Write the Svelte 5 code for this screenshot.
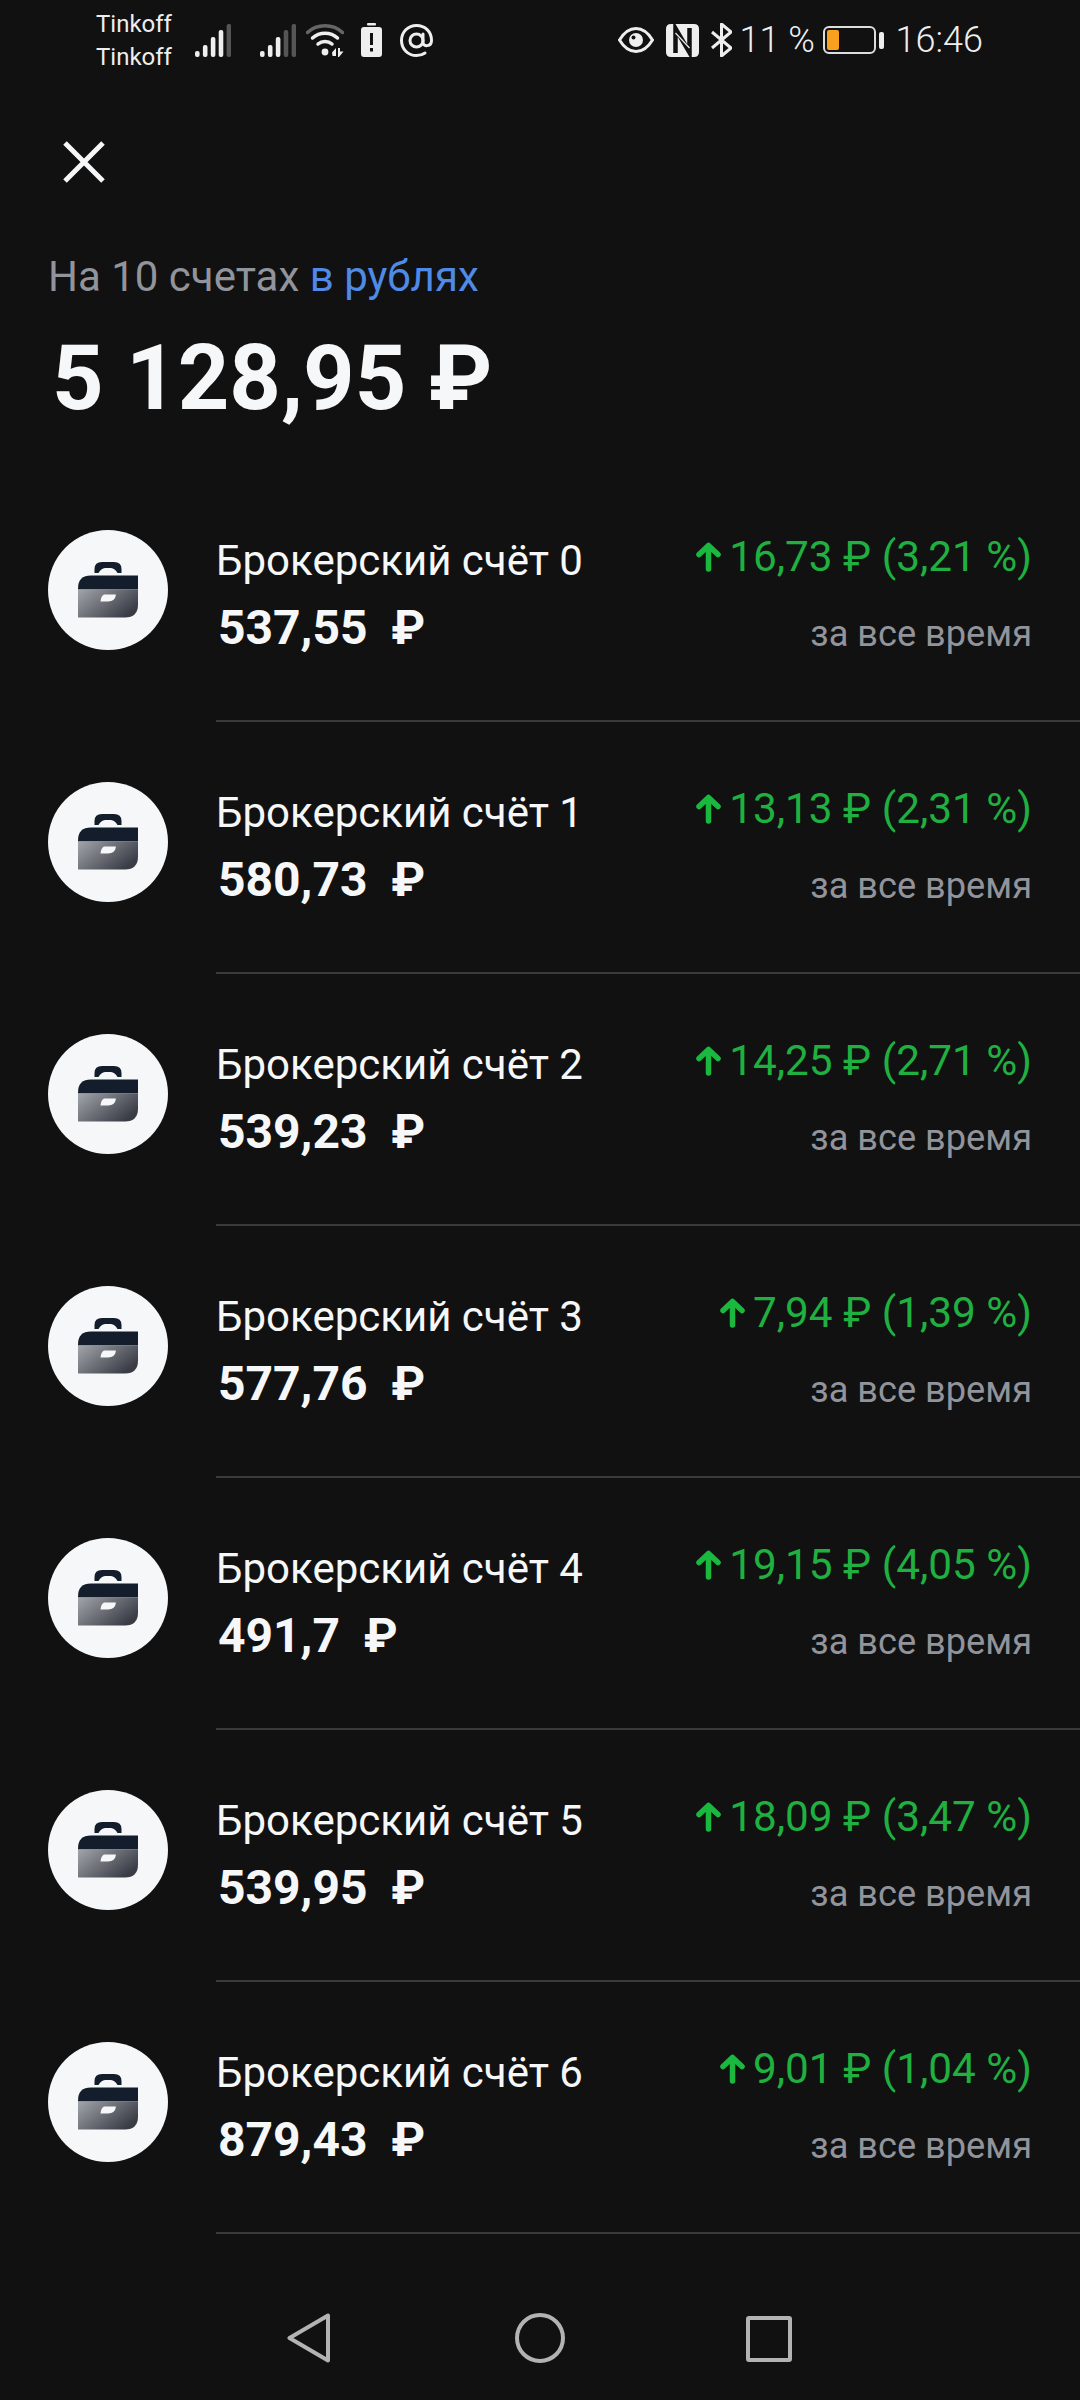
<script>
  const accounts = [
    { name: "Брокерский счёт 0", amount: "537,55", delta: "16,73 ₽ (3,21 %)" },
    { name: "Брокерский счёт 1", amount: "580,73", delta: "13,13 ₽ (2,31 %)" },
    { name: "Брокерский счёт 2", amount: "539,23", delta: "14,25 ₽ (2,71 %)" },
    { name: "Брокерский счёт 3", amount: "577,76", delta: "7,94 ₽ (1,39 %)" },
    { name: "Брокерский счёт 4", amount: "491,7", delta: "19,15 ₽ (4,05 %)" },
    { name: "Брокерский счёт 5", amount: "539,95", delta: "18,09 ₽ (3,47 %)" },
    { name: "Брокерский счёт 6", amount: "879,43", delta: "9,01 ₽ (1,04 %)" }
  ];

  // bar heights of the signal icon
  const bars = [6, 12, 20, 27, 33];
</script>

<div class="screen">
  <header class="status">
    <div class="carriers"><span>Tinkoff</span><span>Tinkoff</span></div>

    <svg class="signal" width="36" height="33" viewBox="0 0 36 33">
      {#each bars as h, i}
        <rect x={i * 7.9} y={33 - h} width="4.6" height={h} rx="2" fill={i > 3 ? "#555" : "#eee"} />
      {/each}
    </svg>
    <svg class="signal second" width="36" height="33" viewBox="0 0 36 33">
      {#each bars as h, i}
        <rect x={i * 7.9} y={33 - h} width="4.6" height={h} rx="2" fill={i > 2 ? "#555" : "#eee"} />
      {/each}
    </svg>
    <svg class="wifi" width="38" height="33" viewBox="0 0 38 33" fill="none" stroke-width="3.5" stroke-linecap="round">
      <path d="M1.5 8.5C11 -0.5 27 -0.5 36.5 8.5" stroke="#666" />
      <path d="M6.5 14C13.5 7.5 24.5 7.5 31.5 14" stroke="#eee" />
      <path d="M12 20C16 16.5 22 16.5 26 20" stroke="#eee" />
      <circle cx="19" cy="28" r="3.4" fill="#eee" stroke="none" />
      <path d="M26 28.5L30 24V32H26.5Z M32 24H34V27.5H37.5L33 33H32Z" fill="#eee" stroke="none" />
    </svg>
    <svg class="batt-alert" width="21" height="34" viewBox="0 0 21 34">
      <rect x="6" y="0" width="9" height="2.5" rx="1" fill="#eee" />
      <path d="M3 4H18Q21 4 21 7V31Q21 34 18 34H3Q0 34 0 31V7Q0 4 3 4ZM9 10V22H12V10ZM9 25V28.5H12V25Z" fill="#eee" fill-rule="evenodd" />
    </svg>
    <svg class="at" width="33" height="33" viewBox="0 0 33 33" fill="none" stroke="#eee" stroke-width="3">
      <circle cx="16.5" cy="16.5" r="6.5" />
      <path d="M23 10V18.5C23 23 31.5 23 31.5 16.5C31.5 7.5 25 1.5 16.5 1.5C8 1.5 1.5 8 1.5 16.5C1.5 25 8 31.5 16.5 31.5C20 31.5 22.5 30.8 25 29" stroke-linecap="round" />
    </svg>

    <div class="status-right">
      <svg width="36" height="26" viewBox="0 0 36 26" fill="none">
        <path d="M1.5 13C6 5.5 11.5 1.5 18 1.5C24.5 1.5 30 5.5 34.5 13C30 20.5 24.5 24.5 18 24.5C11.5 24.5 6 20.5 1.5 13Z" stroke="#eee" stroke-width="3" />
        <circle cx="18" cy="13" r="7" fill="#eee" />
        <circle cx="15.5" cy="10.5" r="2" fill="#111" />
      </svg>
      <svg class="nfc" width="33" height="33" viewBox="0 0 33 33" fill="none">
        <path d="M5 0H28Q33 0 33 5V28Q33 33 28 33H5Q0 33 0 28V5Q0 0 5 0Z" fill="#eee" />
        <path d="M9.5 29V4.5L23.5 28.5V4" stroke="#111" stroke-width="4.5" />
        <path d="M9.5 9L23.5 24" stroke="#eee" stroke-width="1.2" />
      </svg>
      <svg class="bt" width="21" height="34" viewBox="0 0 21 34" fill="none" stroke="#eee" stroke-width="3" stroke-linejoin="round">
        <path d="M1 9L20 25L10.5 33V1L20 9L1 25" />
      </svg>
      <span class="pct">11 %</span>
      <div class="battery"><div class="battery-fill"></div></div>
      <div class="battery-nub"></div>
      <span class="time">16:46</span>
    </div>
  </header>

  <button class="close" aria-label="Закрыть">
    <svg width="42" height="42" viewBox="0 0 42 42" stroke="#f6f7f8" stroke-width="5" fill="none">
      <path d="M2 2L40 40M40 2L2 40" />
    </svg>
  </button>

  <p class="subtitle">На 10 счетах <span class="link">в рублях</span></p>
  <h1 class="total">5 128,95 ₽</h1>

  <ul class="list">
    {#each accounts as acc, i}
      <li class="row">
        <div class="avatar">
          <svg width="60" height="56" viewBox="0 0 60 56">
            <defs>
              <linearGradient id="case-{i}" x1="0" y1="0" x2="1" y2="0.6">
                <stop offset="0" stop-color="#a2a5aa" />
                <stop offset="1" stop-color="#3a3d46" />
              </linearGradient>
            </defs>
            <path d="M16.5 11V7Q16.5 0 24 0H36Q43.5 0 43.5 7V11H39.5Q37 6.5 33 6H27Q23 6.5 20.5 11Z" fill="#131d2b" />
            <path d="M13 13.5H60V27.5H0V26.5Q0 13.5 13 13.5Z" fill="#131d2b" />
            <path d="M0 27.5H60V42.5Q60 55.5 47 55.5H0Z" fill="url(#case-{i})" />
            <path d="M26 32.5H38Q37 39.5 30 39.5H22.5Q23 34 26 32.5Z" fill="#f6f7f8" />
          </svg>
        </div>
        <div class="body">
          <div class="left">
            <div class="name">{acc.name}</div>
            <div class="amount">{acc.amount}&nbsp; ₽</div>
          </div>
          <div class="right">
            <div class="delta">
              <svg class="arrow" width="25" height="30" viewBox="0 0 25 30" fill="none" stroke="#1ab83f" stroke-width="5.5" stroke-linecap="round" stroke-linejoin="round">
                <path d="M12.5 27V3.5M3 12.5L12.5 3.5L22 12.5" />
              </svg>
              <span>{acc.delta}</span>
            </div>
            <div class="period">за все время</div>
          </div>
        </div>
      </li>
    {/each}
  </ul>

  <nav class="nav">
    <svg width="44" height="50" viewBox="0 0 44 50" fill="none" stroke="#b3b3b3" stroke-width="4" stroke-linejoin="round">
      <path d="M41 2.5V47.5L2.5 25Z" />
    </svg>
    <svg width="50" height="50" viewBox="0 0 50 50" fill="none" stroke="#b3b3b3" stroke-width="4">
      <circle cx="25" cy="25" r="23" />
    </svg>
    <svg width="46" height="46" viewBox="0 0 46 46" fill="none" stroke="#b3b3b3" stroke-width="4" stroke-linejoin="round">
      <rect x="2" y="2" width="42" height="42" rx="1" />
    </svg>
  </nav>
</div>

<style>
  :global(body) {
    background: #111112;
  }

  .screen {
    width: 1080px;
    height: 2400px;
    background: #111112;
    color: #f6f7f8;
    font-family: Roboto, "Noto Sans", sans-serif;
    display: flex;
    flex-direction: column;
    overflow: hidden;
  }

  .status {
    display: flex;
    flex: none;
    align-items: center;
    height: 80px;
    padding-left: 96px;
    padding-right: 97px;
    color: #eee;
  }

  .carriers {
    display: flex;
    flex-direction: column;
    padding-top: 2px;
    font-size: 24px;
    line-height: 33px;
    width: 99px;
  }

  .signal.second { margin-left: 29px; }
  .wifi { margin-left: 10px; }
  .batt-alert { margin-left: 17px; }
  .at { margin-left: 18px; }

  .status-right {
    margin-left: auto;
    display: flex;
    align-items: center;
  }

  .nfc { margin-left: 12px; }
  .bt { margin-left: 12px; }

  .pct {
    margin-left: 8px;
    font-size: 36px;
    width: 83px;
    font-weight: 300;
  }

  .battery {
    width: 53px;
    height: 28px;
    box-sizing: border-box;
    border: 2px solid #ddd;
    border-radius: 6px;
    padding: 2px;
  }

  .battery-fill {
    width: 12px;
    height: 100%;
    background: #f9a11e;
    border-radius: 2px;
  }

  .battery-nub {
    width: 5px;
    height: 17px;
    margin-left: 3px;
    background: #eee;
    border-radius: 2px;
  }

  .time {
    margin-left: 12px;
    font-size: 36px;
    font-weight: 300;
  }

  .close {
    align-self: flex-start;
    margin: 61px 0 0 63px;
    padding: 0;
    width: 42px;
    height: 42px;
    background: none;
    border: none;
    display: block;
  }

  .subtitle {
    margin: 69px 0 0 48px;
    font-size: 42px;
    line-height: 50px;
    color: #92949c;
  }

  .link { color: #4f8be6; }

  .total {
    margin: 25px 0 39px 52px;
    font-size: 90px;
    line-height: 104px;
    font-weight: 700;
  }

  .list {
    list-style: none;
    margin: 0;
    padding: 0;
    flex: 1;
  }

  .row {
    display: flex;
    height: 252px;
    padding-left: 48px;
  }

  .avatar {
    flex: none;
    width: 120px;
    height: 120px;
    margin-top: 60px;
    border-radius: 50%;
    background: #f6f7f9;
    display: flex;
    align-items: center;
    justify-content: center;
  }

  .body {
    flex: 1;
    margin-left: 48px;
    padding-right: 48px;
    display: flex;
    justify-content: space-between;
    border-bottom: 2px solid #3a3a3c;
  }

  .left { padding-top: 67px; }

  .name {
    font-size: 42px;
    line-height: 48px;
  }

  .amount {
    margin-top: 17px;
    margin-left: 2px;
    font-size: 48px;
    line-height: 52px;
    font-weight: 700;
  }

  .right {
    padding-top: 63px;
    text-align: right;
  }

  .delta {
    display: flex;
    align-items: center;
    justify-content: flex-end;
    gap: 8px;
    font-size: 42.3px;
    line-height: 48px;
    color: #1fb040;
  }

  .period {
    margin-top: 31px;
    font-size: 36.2px;
    line-height: 44px;
    color: #92949c;
  }

  .nav {
    box-sizing: border-box;
    flex: none;
    height: 166px;
    display: flex;
    align-items: flex-start;
    padding-top: 79px;
    padding-left: 287px;
  }

  .nav svg:nth-child(2) { margin-left: 184px; }
  .nav svg:nth-child(3) { margin-left: 181px; margin-top: 3px; }
</style>
